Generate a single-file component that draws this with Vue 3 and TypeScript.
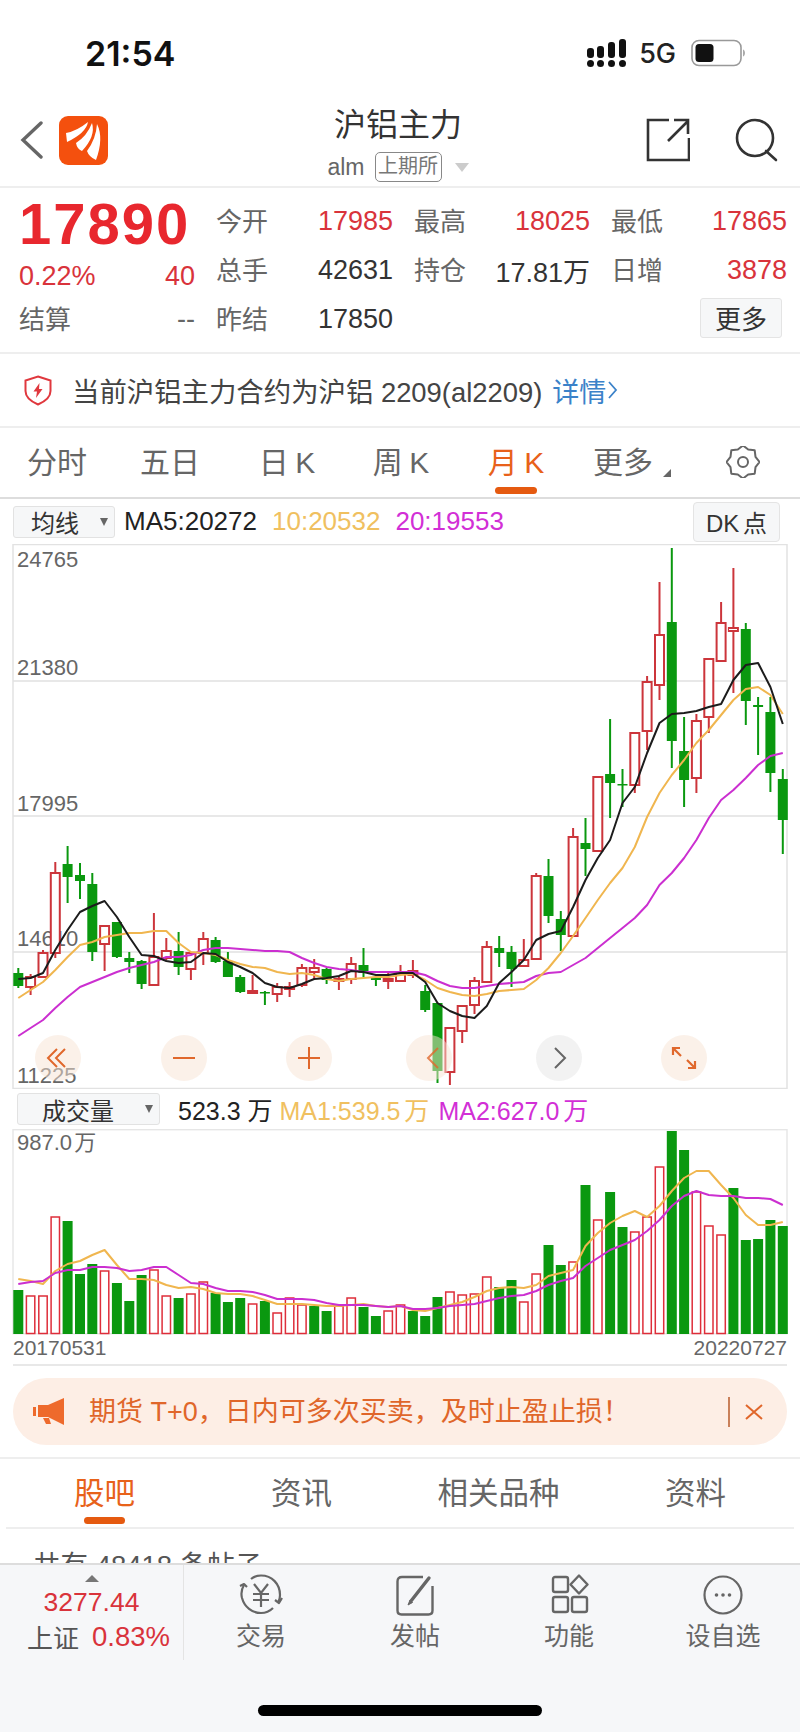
<script setup lang="ts">
// 每根K线: [最高, 实体上沿, 实体下沿, 最低, 涨1/跌0], 数值是图内的y坐标
const candles: number[][] = [
  [968, 973, 986, 988, 0], [974, 977, 987, 995, 1], [950, 953, 977, 977, 1], [862, 873, 953, 958, 1],
  [846, 864, 877, 903, 0], [863, 875, 881, 899, 0], [873, 884, 952, 961, 0], [926, 926, 944, 971, 1],
  [922, 922, 957, 958, 0], [952, 958, 962, 973, 0], [960, 961, 984, 989, 0], [913, 957, 985, 986, 1],
  [938, 951, 958, 960, 1], [932, 951, 967, 975, 0], [953, 953, 969, 980, 1], [932, 939, 953, 965, 1],
  [937, 940, 962, 963, 0], [952, 961, 977, 977, 0], [975, 977, 992, 993, 0], [975, 991, 993, 993, 1],
  [991, 992, 993, 1005, 0], [983, 987, 994, 1002, 1], [982, 987, 989, 997, 1], [964, 968, 985, 987, 1],
  [959, 968, 972, 979, 1], [968, 969, 980, 984, 0], [977, 979, 981, 990, 1], [957, 964, 979, 984, 1],
  [948, 965, 973, 977, 0], [977, 977, 980, 986, 0], [971, 979, 981, 989, 1], [965, 972, 981, 982, 1],
  [960, 971, 975, 978, 1], [985, 991, 1010, 1012, 0], [1003, 1003, 1071, 1083, 0], [1028, 1028, 1072, 1085, 1],
  [1006, 1006, 1031, 1043, 1], [977, 981, 1005, 1014, 1], [941, 947, 982, 982, 1], [936, 948, 953, 967, 0],
  [946, 952, 969, 987, 0], [939, 960, 966, 966, 1], [873, 876, 959, 959, 1], [859, 876, 916, 923, 0],
  [911, 919, 935, 951, 0], [828, 837, 936, 936, 1], [818, 843, 849, 876, 0], [777, 777, 851, 852, 1],
  [719, 774, 783, 818, 0], [769, 784, 785, 807, 0], [733, 733, 785, 793, 1], [676, 682, 731, 750, 1],
  [582, 635, 685, 700, 1], [548, 622, 741, 768, 0], [717, 751, 780, 807, 0], [714, 721, 778, 793, 1],
  [659, 659, 717, 733, 1], [602, 623, 661, 661, 1], [568, 628, 631, 693, 1], [623, 629, 701, 725, 0],
  [697, 705, 707, 755, 0], [697, 712, 773, 792, 0], [769, 779, 820, 854, 0],
];

const ma5 = [979, 978, 973, 950, 930, 912, 906, 901, 917, 937, 955, 956, 961, 963, 962, 953, 954, 962, 967, 973, 983, 987, 988, 984, 979, 978, 976, 971, 972, 975, 975, 973, 973, 982, 1003, 1011, 1016, 1018, 1006, 983, 972, 960, 940, 934, 931, 907, 880, 858, 840, 803, 787, 753, 723, 714, 713, 711, 707, 704, 680, 665, 663, 687, 724];
const ma10 = [998, 990, 982, 970, 957, 945, 942, 937, 935, 933, 933, 931, 931, 943, 952, 953, 955, 960, 964, 967, 968, 972, 974, 973, 975, 979, 981, 979, 978, 977, 977, 975, 974, 980, 988, 992, 995, 996, 994, 991, 990, 989, 980, 968, 953, 936, 918, 900, 883, 868, 847, 817, 793, 775, 760, 743, 730, 715, 700, 689, 687, 695, 714];
const ma20 = [1036, 1028, 1020, 1008, 997, 987, 982, 977, 972, 968, 965, 962, 957, 957, 955, 950, 948, 948, 949, 950, 951, 951, 952, 958, 963, 967, 969, 970, 972, 972, 972, 972, 972, 975, 981, 986, 988, 988, 986, 984, 983, 982, 976, 973, 972, 965, 958, 948, 938, 928, 918, 905, 885, 873, 858, 840, 818, 800, 790, 778, 765, 756, 753];

// 成交量柱高和两条均量线, 单位是像素
const vols = [44, 38, 38, 117, 113, 60, 70, 63, 51, 33, 59, 64, 38, 36, 40, 52, 41, 32, 36, 30, 33, 21, 36, 29, 28, 23, 28, 36, 27, 18, 23, 29, 23, 18, 37, 42, 39, 40, 57, 47, 54, 32, 60, 89, 69, 72, 149, 114, 142, 107, 102, 117, 167, 203, 184, 142, 108, 99, 146, 94, 95, 114, 108];
const volUp = new Set([1, 2, 3, 7, 11, 12, 14, 15, 19, 21, 22, 23, 26, 27, 30, 31, 35, 36, 37, 38, 41, 42, 45, 47, 50, 51, 52, 55, 56, 57]);
const volMa1 = [55, 53, 50, 63, 70, 73, 79, 84, 69, 55, 55, 54, 49, 46, 47, 45, 41, 40, 40, 38, 34, 30, 30, 30, 29, 28, 28, 29, 30, 28, 27, 28, 24, 23, 26, 29, 32, 37, 43, 46, 47, 46, 49, 58, 61, 64, 88, 101, 111, 118, 123, 117, 128, 143, 156, 163, 163, 149, 136, 119, 109, 109, 112];
const volMa2 = [50, 52, 53, 61, 64, 64, 67, 67, 66, 63, 64, 67, 67, 59, 51, 50, 46, 43, 43, 42, 39, 35, 35, 35, 34, 31, 29, 29, 29, 28, 27, 28, 25, 25, 26, 28, 29, 30, 33, 36, 38, 39, 43, 49, 53, 56, 68, 76, 84, 89, 94, 103, 114, 128, 138, 143, 139, 138, 138, 136, 136, 135, 129];

const xAt = (i: number) => +(18.3 + i * 12.33).toFixed(1);
const VOL_BASE = 205;

const linePoints = (ys: number[]) => ys.map((y, i) => `${xAt(i)},${y}`).join(" ");
const volPoints = (hs: number[]) => hs.map((h, i) => `${xAt(i)},${VOL_BASE - h}`).join(" ");

const gridLines = [681, 816, 952];
const priceLabels = [
  { y: 567, text: "24765" },
  { y: 675, text: "21380" },
  { y: 811, text: "17995" },
  { y: 946, text: "14610" },
  { y: 1083, text: "11225" },
];

const stats = [
  { label: "今开", value: "17985", red: true },
  { label: "最高", value: "18025", red: true },
  { label: "最低", value: "17865", red: true },
  { label: "总手", value: "42631", red: false },
  { label: "持仓", value: "17.81万", red: false },
  { label: "日增", value: "3878", red: true },
];

const tabs = ["分时", "五日", "日 K", "周 K", "月 K", "更多"];
const infoTabs = ["股吧", "资讯", "相关品种", "资料"];

// 齿轮外轮廓
const gearPoints = Array.from({ length: 16 }, (_, k) => {
  const r = k % 2 === 0 ? 16.5 : 13.5;
  const a = (Math.PI / 8) * k;
  return `${(17 + r * Math.sin(a)).toFixed(1)},${(16 - r * Math.cos(a)).toFixed(1)}`;
}).join(" ");
</script>

<template>
  <div class="page">
    <div class="status">
      <span class="time">21:54</span>
      <div class="status-right">
        <svg class="signal" width="40" height="28" viewBox="0 0 40 28">
          <g fill="#111">
            <rect x="0" y="9" width="7" height="10" rx="3" />
            <rect x="10" y="7" width="7" height="12" rx="3" />
            <rect x="21" y="3" width="7" height="16" rx="3" />
            <rect x="32" y="0" width="7" height="19" rx="3" />
            <circle cx="3.5" cy="24.5" r="3.5" />
            <circle cx="13.5" cy="24.5" r="3.5" />
            <circle cx="24.5" cy="24.5" r="3.5" />
            <circle cx="35.5" cy="24.5" r="3.5" />
          </g>
        </svg>
        <span class="net">5G</span>
        <svg width="54" height="28" viewBox="0 0 54 28">
          <rect x="1" y="1.5" width="49" height="25" rx="7" fill="none" stroke="#999" stroke-width="1.6" />
          <rect x="4.5" y="5" width="18" height="18" rx="3.5" fill="#111" />
          <path d="M52 10.5c1.5.6 2 2 2 3.500s-.5 2.900-2 3.500z" fill="#aaa" />
        </svg>
      </div>
    </div>

    <div class="nav">
      <div class="nav-left">
        <svg width="24" height="38" viewBox="0 0 24 38">
          <path d="M21 2 3 19l18 17" fill="none" stroke="#666" stroke-width="3.4" stroke-linecap="round" />
        </svg>
        <svg class="logo" width="49" height="49" viewBox="0 0 49 49">
          <rect width="49" height="49" rx="9" fill="#f4500e" />
          <g fill="#fff">
            <path d="M7 17Q18 15 29 6Q27 17 8 26Z" />
            <path d="M17 27Q28 20 33 7Q37 20 23 35Q18 33 17 27Z" />
            <path d="M28 35Q37 23 38 8Q45 22 37 44Q30 41 28 35Z" />
          </g>
        </svg>
      </div>
      <div class="nav-center">
        <div class="title">沪铝主力</div>
        <div class="sub">
          <span class="code">alm</span>
          <span class="exchange">上期所</span>
          <i class="sub-caret"></i>
        </div>
      </div>
      <div class="nav-right">
        <svg width="44" height="44" viewBox="0 0 44 44" fill="none" stroke="#333" stroke-width="2.6">
          <path d="M23 2H2v40h41V20" />
          <path d="M22 23 42 3M28 2h14v14" />
        </svg>
        <svg width="44" height="44" viewBox="0 0 44 44" fill="none" stroke="#333" stroke-width="2.6" stroke-linecap="round">
          <circle cx="20" cy="20" r="18" />
          <path d="M31 33l10 9" />
        </svg>
      </div>
    </div>

    <div class="stats">
      <div class="quote">
        <div class="price">17890</div>
        <div class="change">
          <span>0.22%</span>
          <span>40</span>
        </div>
      </div>
      <div v-for="s in stats" :key="s.label" class="cell">
        <span class="cell-label">{{ s.label }}</span>
        <span :class="['cell-value', { red: s.red }]">{{ s.value }}</span>
      </div>
      <div class="cell">
        <span class="cell-label">结算</span>
        <span class="cell-value muted">--</span>
      </div>
      <div class="cell">
        <span class="cell-label">昨结</span>
        <span class="cell-value">17850</span>
      </div>
      <div class="cell"></div>
      <div class="cell cell-end">
        <button class="more">更多</button>
      </div>
    </div>

    <div class="notice">
      <svg width="28" height="31" viewBox="0 0 28 31">
        <path d="M14 1.500 26.500 5.500V16c0 7-5.500 10.500-12.500 13.500C7 26.500 1.500 23 1.500 16V5.500Z" fill="none" stroke="#e0383e" stroke-width="2" />
        <path d="M15.500 8 9.500 16.500H13L12 23l6.500-9H15Z" fill="#e0383e" />
      </svg>
      <span class="notice-text">当前沪铝主力合约为沪铝 2209(al2209)</span>
      <span class="notice-link">详情</span>
      <svg class="notice-arrow" width="10" height="20" viewBox="0 0 10 20">
        <path d="M1 2l7 8-7 8" fill="none" stroke="#3b82c9" stroke-width="1.800" />
      </svg>
    </div>

    <div class="tabs">
      <div v-for="t in tabs" :key="t" :class="['tab', { active: t === '月 K' }]">
        {{ t }}
        <i v-if="t === '更多'" class="tab-caret"></i>
      </div>
      <div class="tab tab-gear">
        <svg width="34" height="32" viewBox="0 0 34 32" fill="none" stroke="#666" stroke-width="2">
          <polygon :points="gearPoints" stroke-linejoin="round" />
          <circle cx="17" cy="16" r="5" />
        </svg>
      </div>
    </div>

    <div class="toolbar">
      <div class="picker picker-ma">
        <span>均线</span>
        <i class="picker-caret"></i>
      </div>
      <span class="ma dark">MA5:20272</span>
      <span class="ma orange">10:20532</span>
      <span class="ma purple">20:19553</span>
      <button class="dk">DK 点</button>
    </div>

    <!-- viewBox 的 y 直接用整页坐标 -->
    <svg class="chart" width="800" height="545" viewBox="0 544 800 545">
      <rect x="13" y="544.500" width="774" height="544" fill="#fff" stroke="#e2e2e2" stroke-width="1.500" />
      <line v-for="y in gridLines" :key="y" x1="13" x2="787" :y1="y" :y2="y" stroke="#e0e0e0" stroke-width="1.500" />
      <text v-for="p in priceLabels" :key="p.text" x="17" :y="p.y" class="axis">{{ p.text }}</text>
      <g v-for="(c, i) in candles" :key="i">
        <template v-if="c[4]">
          <line :x1="xAt(i)" :x2="xAt(i)" :y1="c[0]" :y2="c[3]" stroke="#cc353b" stroke-width="2" />
          <rect :x="xAt(i) - 4.500" :y="c[1]" width="9" :height="Math.max(c[2] - c[1], 2)" fill="#fff" stroke="#cc353b" stroke-width="2" />
        </template>
        <template v-else>
          <line :x1="xAt(i)" :x2="xAt(i)" :y1="c[0]" :y2="c[3]" stroke="#0a980f" stroke-width="2" />
          <rect :x="xAt(i) - 5" :y="c[1]" width="10" :height="Math.max(c[2] - c[1], 1.500)" fill="#0a980f" />
        </template>
      </g>
      <polyline :points="linePoints(ma20)" fill="none" stroke="#cb2fd0" stroke-width="2" stroke-linejoin="round" />
      <polyline :points="linePoints(ma10)" fill="none" stroke="#f0b64f" stroke-width="2" stroke-linejoin="round" />
      <polyline :points="linePoints(ma5)" fill="none" stroke="#1c1c1c" stroke-width="2" stroke-linejoin="round" />

      <!-- 缩放按钮 -->
      <g fill="#f7e3d4" fill-opacity="0.5">
        <circle cx="58" cy="1058" r="23" />
        <circle cx="184" cy="1058" r="23" />
        <circle cx="309" cy="1058" r="23" />
        <circle cx="429" cy="1058" r="23" />
        <circle cx="684" cy="1058" r="23" />
      </g>
      <circle cx="559" cy="1058" r="23" fill="#ececec" fill-opacity="0.7" />
      <g fill="none" stroke="#e0682c" stroke-width="2">
        <path d="M57 1049l-9 9 9 9M65 1049l-9 9 9 9" />
        <path d="M173 1058h22" />
        <path d="M298 1058h22M309 1047v22" />
        <path d="M438 1048l-10 10 10 10" stroke-opacity="0.8" />
        <path d="M673 1055v-7h7M673 1048l8 8M695 1061v7h-7M695 1068l-8-8" stroke-width="2.200" />
      </g>
      <path d="M555 1048l10 10-10 10" fill="none" stroke="#666" stroke-width="2" />
    </svg>

    <div class="toolbar vol-bar">
      <div class="picker picker-vol">
        <span>成交量</span>
        <i class="picker-caret"></i>
      </div>
      <span class="vol-ma dark">523.3 万</span>
      <span class="vol-ma orange">MA1:539.5 万</span>
      <span class="vol-ma purple">MA2:627.0 万</span>
    </div>

    <svg class="chart" width="800" height="206" viewBox="0 0 800 206">
      <rect x="13" y="0.700" width="774" height="204" fill="#fff" stroke="#e6e6e6" stroke-width="1.400" />
      <text x="17" y="21" class="axis vol-axis">987.0 万</text>
      <template v-for="(h, i) in vols" :key="i">
        <rect v-if="volUp.has(i)" :x="xAt(i) - 4.200" :y="VOL_BASE - h" width="8.400" :height="h - 0.500" fill="#fff" stroke="#de2e3a" stroke-width="1.500" />
        <rect v-else :x="xAt(i) - 5" :y="VOL_BASE - h" width="10" :height="h" fill="#0a980f" />
      </template>
      <polyline :points="volPoints(volMa1)" fill="none" stroke="#f0b64f" stroke-width="2" stroke-linejoin="round" />
      <polyline :points="volPoints(volMa2)" fill="none" stroke="#cb2fd0" stroke-width="2" stroke-linejoin="round" />
    </svg>

    <div class="dates">
      <span>20170531</span>
      <span>20220727</span>
    </div>

    <div class="banner-wrap">
      <div class="banner">
        <svg width="32" height="27" viewBox="0 0 32 27">
          <g fill="#ee6a2c">
            <rect x="0" y="9" width="3" height="9" />
            <path d="M5 7h10L31 0v27L15 19H5Z" />
            <path d="M10 20h6l2 6h-5Z" />
          </g>
        </svg>
        <span class="banner-text">期货 T+0，日内可多次买卖，及时止盈止损！</span>
        <i class="banner-sep"></i>
        <svg width="18" height="16" viewBox="0 0 18 16">
          <path d="M1 1l16 14M17 1 1 15" fill="none" stroke="#e0662a" stroke-width="2" />
        </svg>
      </div>
    </div>

    <div class="info-tabs">
      <div v-for="(t, i) in infoTabs" :key="t" :class="['info-tab', { active: i === 0 }]">{{ t }}</div>
    </div>

    <div class="post-count">共有 48418 条帖子</div>

    <div class="bottom">
      <div class="index">
        <i class="index-arrow"></i>
        <div class="index-value">3277.44</div>
        <div class="index-row">
          <span class="index-name">上证</span>
          <span class="index-pct">0.83%</span>
        </div>
      </div>
      <div class="action">
        <svg width="44" height="42" viewBox="0 0 44 42" fill="none" stroke="#666" stroke-width="2.200">
          <path d="M5 11C2.500 15 2 20 3 24c2.500 9 10 15 19 15 5 0 9-2 12-5" />
          <path d="M12 5c3-2.500 6.500-3.500 10-3.500C33 1.500 41 10 41 21c0 2.500-.5 5-1.500 7" />
          <path d="M1 12l4-2 3 3M43 24l-3 5-4-3" stroke-linejoin="round" />
          <path d="M15 10l7 9 7-9M22 19v14M14 20h16M14 26h16" />
        </svg>
        <span>交易</span>
      </div>
      <div class="action">
        <svg width="44" height="42" viewBox="0 0 44 42" fill="none" stroke="#666" stroke-width="2.400">
          <path d="M30 3H9C6 3 4.500 4.500 4.500 7.500v29c0 2.500 1.500 4 4 4h27c2.500 0 4-1.500 4-4V12" />
          <path d="M18 27 36 4" stroke-width="3.400" stroke-linecap="round" />
          <path d="M17 26l-2 5 4.500-2.500Z" fill="#666" stroke-width="1" />
        </svg>
        <span>发帖</span>
      </div>
      <div class="action">
        <svg width="44" height="42" viewBox="0 0 44 42" fill="none" stroke="#666" stroke-width="2.400">
          <rect x="6" y="3" width="15" height="15" rx="2" />
          <rect x="6" y="23" width="15" height="15" rx="2" />
          <rect x="25" y="23" width="15" height="15" rx="2" />
          <path d="M32 1.500 40.500 10.500 32 19.500 23.500 10.500Z" stroke-linejoin="round" />
        </svg>
        <span>功能</span>
      </div>
      <div class="action">
        <svg width="44" height="42" viewBox="0 0 44 42" fill="none" stroke="#666" stroke-width="2.200">
          <circle cx="22" cy="21" r="18.500" />
          <g fill="#666" stroke="none">
            <circle cx="15.500" cy="21" r="1.800" />
            <circle cx="22" cy="21" r="1.800" />
            <circle cx="28.500" cy="21" r="1.800" />
          </g>
        </svg>
        <span>设自选</span>
      </div>
      <i class="home-bar"></i>
    </div>
  </div>
</template>

<style scoped>
.page {
  width: 800px;
  height: 1732px;
  overflow: hidden;
  display: flex;
  flex-direction: column;
  background: #fff;
  font-family: "Liberation Sans", "Noto Sans CJK SC", sans-serif;
  color: #333;
}
.red {
  color: #d9333b;
}
.dark {
  color: #222;
}
.orange {
  color: #f0c060;
}
.purple {
  color: #d22fd6;
}

.status {
  flex: none;
  height: 94px;
  box-sizing: border-box;
  padding: 12px 55px 0 85px;
  display: flex;
  align-items: center;
  justify-content: space-between;
}
.time {
  font-family: Inter, "Liberation Sans", sans-serif;
  font-size: 34px;
  font-weight: 600;
  color: #111;
}
.status-right {
  display: flex;
  align-items: center;
  gap: 12px;
}
.net {
  font-family: Inter, "Liberation Sans", sans-serif;
  font-size: 27px;
  font-weight: 500;
  margin-right: 3px;
  color: #222;
}

.nav {
  flex: none;
  height: 94px;
  box-sizing: border-box;
  border-bottom: 2px solid #eee;
  display: grid;
  grid-template-columns: 298px 200px 1fr;
}
.nav-left {
  display: flex;
  align-items: center;
  gap: 15px;
  padding-left: 20px;
}
.nav-center {
  display: flex;
  flex-direction: column;
  align-items: center;
  padding-top: 13px;
}
.title {
  font-size: 32px;
  line-height: 36px;
  color: #333;
}
.sub {
  display: flex;
  align-items: center;
  margin-top: 9px;
  gap: 10px;
}
.code {
  font-size: 23px;
  color: #666;
}
.exchange {
  box-sizing: border-box;
  width: 67px;
  height: 30px;
  border: 1px solid #888;
  border-radius: 5px;
  font-size: 20px;
  line-height: 27px;
  text-align: center;
  color: #777;
}
.sub-caret {
  margin-left: 3px;
  width: 0;
  height: 0;
  border-left: 7px solid transparent;
  border-right: 7px solid transparent;
  border-top: 9px solid #ccc;
}
.nav-right {
  display: flex;
  justify-content: flex-end;
  align-items: center;
  gap: 45px;
  padding-right: 21px;
}

.stats {
  flex: none;
  height: 166px;
  box-sizing: border-box;
  padding: 9px 13px 0 19px;
  border-bottom: 2px solid #eee;
  display: grid;
  grid-template-columns: 176px 177px 176px 176px;
  grid-auto-rows: 49px;
  column-gap: 21px;
}
.quote {
  grid-row: span 2;
}
.price {
  font-size: 58px;
  line-height: 54px;
  font-weight: 700;
  letter-spacing: 2px;
  color: #e8272e;
}
.change {
  margin-top: 12px;
  display: flex;
  justify-content: space-between;
  font-size: 27px;
  line-height: 26px;
  color: #d9333b;
}
.cell {
  display: flex;
  align-items: center;
  justify-content: space-between;
}
.cell-end {
  justify-content: flex-end;
  padding: 0 5px 4px 0;
}
.cell-label {
  font-size: 26px;
  padding-bottom: 4px;
  color: #666;
}
.cell-value {
  font-size: 27px;
  color: #333;
}
.cell-value.red {
  color: #d9333b;
}
.cell-value.muted {
  color: #666;
}
.more {
  width: 82px;
  height: 40px;
  padding: 0;
  box-sizing: border-box;
  background: #f6f7f8;
  border: 1px solid #e4e4e4;
  border-radius: 3px;
  font: inherit;
  font-size: 26px;
  color: #333;
}

.notice {
  flex: none;
  height: 74px;
  box-sizing: border-box;
  border-bottom: 2px solid #eee;
  padding-left: 24px;
  display: flex;
  align-items: center;
  font-size: 27.4px;
}
.notice-text {
  margin-left: 20px;
  color: #444;
}
.notice-link {
  margin-left: 10px;
  font-size: 27px;
  color: #3b82c9;
  white-space: nowrap;
}
.notice-arrow {
  margin-left: 2px;
}

.tabs {
  flex: none;
  height: 71px;
  box-sizing: border-box;
  border-bottom: 2px solid #ddd;
  display: grid;
  grid-template-columns: 114px 112px 122px 106px 124px 90px 132px;
}
.tab {
  position: relative;
  display: flex;
  align-items: center;
  justify-content: center;
  padding-bottom: 5px;
  font-size: 30px;
  word-spacing: -2px;
  color: #666;
}
.tab.active {
  color: #e8611a;
}
.tab.active::after {
  content: "";
  position: absolute;
  left: 41px;
  bottom: 3px;
  width: 42px;
  height: 7px;
  border-radius: 4px;
  background: #e55a10;
}
.tab-gear {
  justify-content: flex-end;
  padding-right: 40px;
  padding-bottom: 2px;
}
.tab-caret {
  position: absolute;
  right: -3px;
  bottom: 20px;
  width: 0;
  height: 0;
  border-left: 8px solid transparent;
  border-bottom: 8px solid #666;
}

.toolbar {
  flex: none;
  height: 45px;
  padding-left: 13px;
  display: flex;
  align-items: center;
}
.picker {
  box-sizing: border-box;
  height: 32px;
  display: flex;
  align-items: center;
  background: #f6f7f8;
  border: 1px solid #e2e2e2;
  border-radius: 3px;
  font-size: 24px;
  color: #333;
}
.picker-ma {
  width: 102px;
  padding-left: 17px;
}
.picker-vol {
  width: 143px;
  padding-left: 24px;
}
.picker-caret {
  margin-left: auto;
  margin-right: 6px;
  width: 0;
  height: 0;
  border-left: 4px solid transparent;
  border-right: 4px solid transparent;
  border-top: 8px solid #666;
}
.ma {
  font-size: 26px;
  margin-right: 15px;
}
.ma.dark {
  margin-left: 9px;
}
.dk {
  margin-left: auto;
  margin-right: 20px;
  width: 87px;
  height: 40px;
  padding: 0;
  box-sizing: border-box;
  background: #f6f7f8;
  border: 1px solid #e4e4e4;
  border-radius: 4px;
  font: inherit;
  font-size: 24px;
  color: #333;
  word-spacing: -3px;
}

.chart {
  flex: none;
  display: block;
}
.axis {
  font-size: 22px;
  fill: #666;
}
.vol-axis {
  word-spacing: -4px;
}

.vol-bar {
  height: 40px;
  padding-left: 17px;
}
.vol-ma {
  font-size: 25px;
  margin-right: 9px;
  word-spacing: -3px;
}
.vol-ma.dark {
  margin-left: 18px;
  margin-right: 7px;
  word-spacing: 0;
}

.dates {
  flex: none;
  height: 31px;
  margin: 0 13px;
  box-sizing: border-box;
  border-bottom: 2px solid #e8e8e8;
  display: flex;
  justify-content: space-between;
  align-items: center;
  padding-bottom: 3px;
  font-size: 21px;
  color: #666;
}

.banner-wrap {
  flex: none;
  height: 93px;
  box-sizing: border-box;
  border-bottom: 2px solid #eee;
  padding: 12px 13px 0;
}
.banner {
  height: 67px;
  box-sizing: border-box;
  border-radius: 34px;
  background: #fdeee5;
  padding: 0 24px 0 20px;
  display: flex;
  align-items: center;
}
.banner-text {
  margin-left: 24px;
  padding-bottom: 4px;
  font-size: 27px;
  color: #e0662a;
}
.banner-sep {
  margin-left: auto;
  margin-right: 15px;
  width: 2px;
  height: 30px;
  background: #c9805a;
}

.info-tabs {
  flex: none;
  height: 70px;
  margin: 0 6px;
  box-sizing: border-box;
  border-bottom: 2px solid #eee;
  display: grid;
  grid-template-columns: repeat(4, 197px);
}
.info-tab {
  position: relative;
  display: flex;
  align-items: center;
  justify-content: center;
  padding-bottom: 5px;
  font-size: 30.5px;
  color: #666;
}
.info-tab.active {
  color: #e8621a;
}
.info-tab.active::after {
  content: "";
  position: absolute;
  left: 78px;
  bottom: 3px;
  width: 41px;
  height: 7px;
  border-radius: 4px;
  background: #e55a10;
}

.post-count {
  flex: none;
  height: 34px;
  overflow: hidden;
  box-sizing: border-box;
  padding: 19px 0 0 33px;
  font-size: 27.5px;
  line-height: 36px;
  color: #555;
}

.bottom {
  position: relative;
  flex: 1;
  background: #f6f7f9;
  border-top: 2px solid #ddd;
  display: grid;
  grid-template-columns: 184px repeat(4, 154px);
  align-items: start;
}
.index {
  box-sizing: border-box;
  height: 95px;
  border-right: 1px solid #e4e4e4;
  display: flex;
  flex-direction: column;
  align-items: center;
  padding-top: 10px;
}
.index-arrow {
  width: 0;
  height: 0;
  border-left: 7px solid transparent;
  border-right: 7px solid transparent;
  border-bottom: 7px solid #777;
}
.index-value {
  margin-top: 5px;
  font-size: 26.5px;
  line-height: 30px;
  color: #d9333b;
}
.index-row {
  margin-top: 1px;
  display: flex;
  align-items: center;
  gap: 13px;
  margin-left: 14px;
}
.index-name {
  font-size: 26px;
  color: #555;
}
.index-pct {
  font-size: 27.5px;
  color: #d9333b;
}
.action {
  display: flex;
  flex-direction: column;
  align-items: center;
  padding-top: 9px;
  font-size: 25px;
  color: #666;
}
.action span {
  margin-top: 2px;
  line-height: 36px;
}
.home-bar {
  position: absolute;
  left: 258px;
  bottom: 16px;
  width: 284px;
  height: 11px;
  border-radius: 6px;
  background: #000;
}
</style>

<style>
html,
body {
  background: #fff;
}
</style>
